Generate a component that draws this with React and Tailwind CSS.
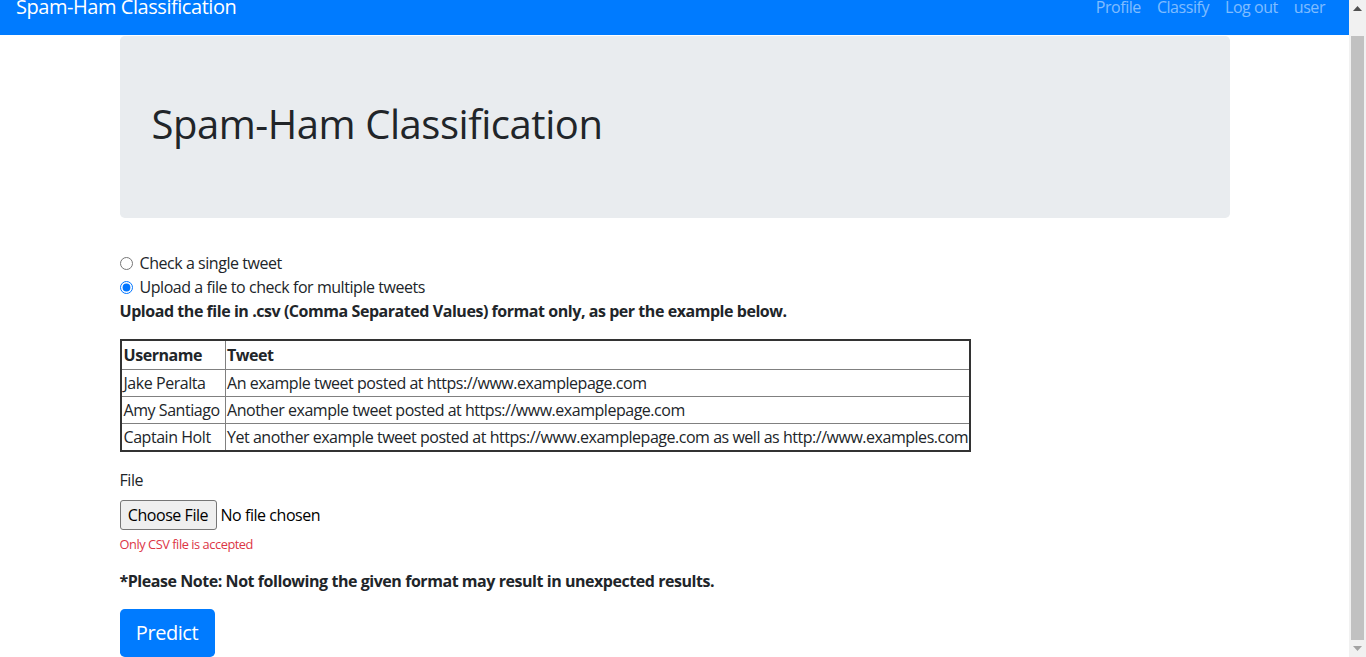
import React from "react";

const rows = [
  ["Jake Peralta", "An example tweet posted at https://www.examplepage.com"],
  ["Amy Santiago", "Another example tweet posted at https://www.examplepage.com"],
  ["Captain Holt", "Yet another example tweet posted at https://www.examplepage.com as well as http://www.examples.com"],
];

function Scrollbar() {
  return (
    <div className="w-[17px] h-[657px] bg-[#f1f1f1] flex flex-col shrink-0">
      <div className="h-[17px] flex items-center justify-center">
        <svg width="9" height="5" viewBox="0 0 9 5">
          <path d="M0 5 L4.5 0 L9 5 Z" fill="#505050" />
        </svg>
      </div>
      <div className="flex-1 pt-[19px] px-[2px]">
        <div className="h-full bg-[#c1c1c1]" />
      </div>
      <div className="h-[17px] flex items-center justify-center">
        <svg width="9" height="5" viewBox="0 0 9 5">
          <path d="M0 0 L9 0 L4.5 5 Z" fill="#a3a3a3" />
        </svg>
      </div>
    </div>
  );
}

export default function App() {
  return (
    <div className="flex h-[657px] overflow-hidden bg-white text-[#212529] font-['Open_Sans','Noto_Sans',sans-serif] tracking-[-0.028em] text-[16px] leading-6">
      <div className="flex-1 min-w-0 overflow-hidden">
        <div className="-mt-[21px]">
          <nav className="h-[56px] bg-[#007bff] flex items-center justify-between px-4">
            <span className="text-[20px] leading-[30px] text-white">Spam-Ham Classification</span>
            <ul className="flex">
              {["Profile", "Classify", "Log out", "user"].map((l) => (
                <li key={l} className="px-2 leading-6 py-2 text-white/50">{l}</li>
              ))}
            </ul>
          </nav>
          <main className="w-[1140px] mx-auto px-[15px]">
            <div className="mt-px bg-[#e9ecef] rounded-[4.8px] pt-16 pb-[70px] px-8">
              <h1 className="text-[40px] leading-[48px] font-medium">Spam-Ham Classification</h1>
            </div>

            <div className="mt-[33px]">
              <label className="flex items-center h-6 gap-[7px]">
                <input type="radio" name="mode" className="w-[13px] h-[13px] m-0 accent-[#0075ff]" />
                <span>Check a single tweet</span>
              </label>
              <label className="flex items-center h-6 gap-[7px]">
                <input type="radio" name="mode" defaultChecked className="w-[13px] h-[13px] m-0 accent-[#0075ff]" />
                <span>Upload a file to check for multiple tweets</span>
              </label>
              <p className="font-bold">Upload the file in .csv (Comma Separated Values) format only, as per the example below.</p>
            </div>

            <table className="mt-4 border-collapse border-2 border-[#333]">
              <thead>
                <tr>
                  <th className="border border-[#808080] h-[29px] w-[105px] pl-[2px] pr-px text-left font-bold">Username</th>
                  <th className="border border-[#808080] h-[29px] px-px text-left font-bold">Tweet</th>
                </tr>
              </thead>
              <tbody>
                {rows.map(([u, t], i) => (
                  <tr key={u}>
                    <td className={`border border-[#808080] ${i === 2 ? "h-[28px]" : "h-[27px]"} pl-[2px] pr-px whitespace-nowrap`}>{u}</td>
                    <td className={`border border-[#808080] ${i === 2 ? "h-[28px]" : "h-[27px]"} px-px whitespace-nowrap tracking-[-0.0295em]`}>{t}</td>
                  </tr>
                ))}
              </tbody>
            </table>

            <div className="mt-[16px]">
              <div className="mb-2">File</div>
              <div className="flex items-center h-[30px]">
                <span className="h-[30px] w-[97px] flex items-center justify-center border border-[#767676] rounded-[3px] bg-[#efefef] text-[#000]">Choose File</span>
                <span className="ml-[4px] text-[#000]">No file chosen</span>
              </div>
              <div className="mt-[5px] text-[12.8px] leading-[19px] text-[#dc3545]">Only CSV file is accepted</div>
            </div>

            <p className="mt-[15px] font-bold">*Please Note: Not following the given format may result in unexpected results.</p>

            <button className="mt-4 h-[48px] w-[95px] rounded-[4.8px] bg-[#007bff] text-white text-[20px] leading-[30px]">Predict</button>
          </main>
        </div>
      </div>
      <Scrollbar />
    </div>
  );
}
